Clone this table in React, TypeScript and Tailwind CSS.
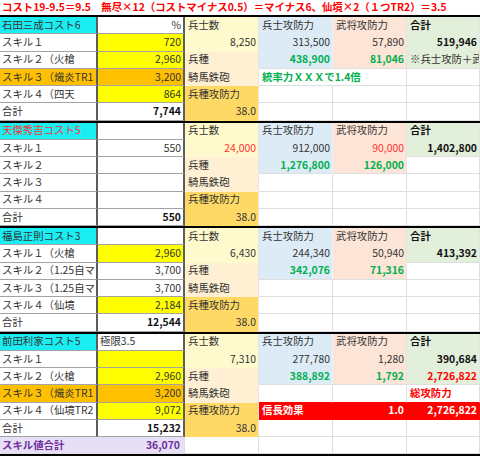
import React from 'react';

const base = 'flex items-center overflow-hidden whitespace-nowrap border-b';

const ly = 'bg-[#fffacd] border-b-[#fffacd] border-r-[#e4e4e4]';
const peach = 'bg-[#fff0d4] border-b-[#fff0d4] border-r-[#e4e4e4]';
const gold = 'bg-[#ffd966] border-b-[#ffd966] border-r-[#e4e4e4]';
const blue = 'bg-[#ddebf7] border-b-[#ddebf7] border-r-[#eef2f6]';
const blueEnd = 'bg-[#ddebf7] border-b-[#dedede] border-r-[#eef2f6]';
const sal = 'bg-[#fce4d6] border-b-[#fce4d6] border-r-[#e4e4e4]';
const salEnd = 'bg-[#fce4d6] border-b-[#dedede] border-r-[#e4e4e4]';
const grn = 'bg-[#e2efda] border-b-[#e2efda] border-r-[#e4e4e4]';
const grnEnd = 'bg-[#e2efda] border-b-[#dedede] border-r-[#e4e4e4]';
const wh = 'bg-white border-b-[#dedede] border-r-[#dedede]';
const red = 'bg-[#ff0000] border-b-[#ff0000] border-r-[#ff0000] text-white font-bold';

const cyan = 'bg-[#1aeef3]';
const yellow = 'bg-[#ffff00]';
const orange = 'bg-[#ffc000]';

type P = { children?: React.ReactNode; className?: string };

function A({ children, className = 'bg-white' }: P) {
  return (
    <div className={`${base} border-r-2 border-r-[#5c5c5c] border-b-[#a3a3a3] pl-[2px] ${className}`}>
      {children}
    </div>
  );
}

function B({ children, className = 'bg-white', left }: P & { left?: boolean }) {
  return (
    <div
      className={`${base} border-r-2 border-r-[#5c5c5c] border-b-[#a3a3a3] ${
        left ? 'justify-start pl-[2px]' : 'justify-end pr-[2px]'
      } ${className}`}
    >
      {children}
    </div>
  );
}

function X({
  children,
  bg = wh,
  right,
  span,
  className = ''
}: {
  children?: React.ReactNode;
  bg?: string;
  right?: boolean;
  span?: boolean;
  className?: string;
}) {
  return (
    <div
      className={`${base} border-r ${bg} ${right ? 'justify-end pr-[2px]' : 'pl-[3px]'} ${
        span ? 'col-span-2' : ''
      } ${className}`}
    >
      {children}
    </div>
  );
}

const grid = 'grid grid-cols-[98px_87px_74px_74px_74px_73px] auto-rows-[17.25px] border-b-2 border-black';

export default function App() {
  return (
    <div className="w-[480px] h-[456px] overflow-hidden bg-white text-[10.4px] leading-none text-[#333] font-['Noto_Sans_CJK_JP',sans-serif]">
      <div className="h-[17px] flex items-center pl-[2px] border-b-2 border-black text-[#ff0000] font-bold whitespace-nowrap">
        コスト19-9.5＝9.5　無尽×12（コストマイナス0.5）＝マイナス6、仙境×2（１つTR2）＝3.5
      </div>

      {/* 石田三成 */}
      <div className={grid}>
        <A className={cyan}>石田三成コスト6</A>
        <B>%</B>
        <X bg={ly}>兵士数</X>
        <X bg={blue}>兵士攻防力</X>
        <X bg={sal}>武将攻防力</X>
        <X bg={grn} className="font-bold text-[#111]">合計</X>

        <A>スキル１</A>
        <B className={yellow}>720</B>
        <X bg={ly} right>8,250</X>
        <X bg={blue} right>313,500</X>
        <X bg={sal} right>57,890</X>
        <X bg={grn} right className="font-bold text-[#111]">519,946</X>

        <A>スキル２（火槍</A>
        <B className={yellow}>2,960</B>
        <X bg={peach}>兵種</X>
        <X bg={blueEnd} right className="font-bold text-[#00b050]">438,900</X>
        <X bg={salEnd} right className="font-bold text-[#00b050]">81,046</X>
        <X bg={grnEnd}>※兵士攻防＋武将攻防</X>

        <A className={orange}>スキル３（熾炎TR1</A>
        <B className={orange}>3,200</B>
        <X bg={peach}>騎馬鉄砲</X>
        <X span className="font-bold text-[#00b050]">統率力ＸＸＸで1.4倍</X>
        <X />

        <A>スキル４（四天</A>
        <B className={yellow}>864</B>
        <X bg={gold}>兵種攻防力</X>
        <X />
        <X />
        <X />

        <A>合計</A>
        <B className="bg-white font-bold text-[#111]">7,744</B>
        <X bg={gold} right>38.0</X>
        <X />
        <X />
        <X />
      </div>

      {/* 天傑秀吉 */}
      <div className={grid}>
        <A className={`${cyan} text-[#ff3030]`}>天傑秀吉コスト5</A>
        <B />
        <X bg={ly}>兵士数</X>
        <X bg={blue}>兵士攻防力</X>
        <X bg={sal}>武将攻防力</X>
        <X bg={grn} className="font-bold text-[#111]">合計</X>

        <A>スキル１</A>
        <B>550</B>
        <X bg={ly} right className="text-[#ff3030]">24,000</X>
        <X bg={blue} right>912,000</X>
        <X bg={sal} right className="text-[#ff3030]">90,000</X>
        <X bg={grnEnd} right className="font-bold text-[#111]">1,402,800</X>

        <A>スキル２</A>
        <B />
        <X bg={peach}>兵種</X>
        <X bg={blueEnd} right className="font-bold text-[#00b050]">1,276,800</X>
        <X bg={salEnd} right className="font-bold text-[#00b050]">126,000</X>
        <X />

        <A>スキル３</A>
        <B />
        <X bg={peach}>騎馬鉄砲</X>
        <X />
        <X />
        <X />

        <A>スキル４</A>
        <B />
        <X bg={gold}>兵種攻防力</X>
        <X />
        <X />
        <X />

        <A>合計</A>
        <B className="bg-white font-bold text-[#111]">550</B>
        <X bg={gold} right>38.0</X>
        <X />
        <X />
        <X />
      </div>

      {/* 福島正則 */}
      <div className={grid}>
        <A className={cyan}>福島正則コスト3</A>
        <B />
        <X bg={ly}>兵士数</X>
        <X bg={blue}>兵士攻防力</X>
        <X bg={sal}>武将攻防力</X>
        <X bg={grn} className="font-bold text-[#111]">合計</X>

        <A>スキル１（火槍</A>
        <B className={yellow}>2,960</B>
        <X bg={ly} right>6,430</X>
        <X bg={blue} right>244,340</X>
        <X bg={sal} right>50,940</X>
        <X bg={grnEnd} right className="font-bold text-[#111]">413,392</X>

        <A>スキル２（1.25自マス</A>
        <B>3,700</B>
        <X bg={peach}>兵種</X>
        <X bg={blueEnd} right className="font-bold text-[#00b050]">342,076</X>
        <X bg={salEnd} right className="font-bold text-[#00b050]">71,316</X>
        <X />

        <A>スキル３（1.25自マス</A>
        <B>3,700</B>
        <X bg={peach}>騎馬鉄砲</X>
        <X />
        <X />
        <X />

        <A>スキル４（仙境</A>
        <B className={yellow}>2,184</B>
        <X bg={gold}>兵種攻防力</X>
        <X />
        <X />
        <X />

        <A>合計</A>
        <B className="bg-white font-bold text-[#111]">12,544</B>
        <X bg={gold} right>38.0</X>
        <X />
        <X />
        <X />
      </div>

      {/* 前田利家 */}
      <div className={`${grid} border-b-0`}>
        <A className={cyan}>前田利家コスト5</A>
        <B left>極限3.5</B>
        <X bg={ly}>兵士数</X>
        <X bg={blue}>兵士攻防力</X>
        <X bg={sal}>武将攻防力</X>
        <X bg={grn} className="font-bold text-[#111]">合計</X>

        <A>スキル１</A>
        <B className={yellow} />
        <X bg={ly} right>7,310</X>
        <X bg={blue} right>277,780</X>
        <X bg={sal} right>1,280</X>
        <X bg={grn} right className="font-bold text-[#111]">390,684</X>

        <A>スキル２（火槍</A>
        <B className={yellow}>2,960</B>
        <X bg={peach}>兵種</X>
        <X bg={blueEnd} right className="font-bold text-[#00b050]">388,892</X>
        <X bg={salEnd} right className="font-bold text-[#00b050]">1,792</X>
        <X bg={grnEnd} right className="font-bold text-[#ff0000]">2,726,822</X>

        <A className={orange}>スキル３（熾炎TR1</A>
        <B className={orange}>3,200</B>
        <X bg={peach}>騎馬鉄砲</X>
        <X bg="bg-white border-b-[#ff0000] border-r-[#dedede]" />
        <X bg="bg-white border-b-[#ff0000] border-r-[#dedede]" />
        <X bg="bg-white border-b-[#ff0000] border-r-[#dedede]" className="font-bold text-[#ff0000]">総攻防力</X>

        <A>スキル４（仙境TR2</A>
        <B className={yellow}>9,072</B>
        <X bg={gold}>兵種攻防力</X>
        <X bg={red}>信長効果</X>
        <X bg={red} right>1.0</X>
        <X bg={red} right>2,726,822</X>

        <A>合計</A>
        <B className="bg-white font-bold text-[#111]">15,232</B>
        <X bg={gold} right>38.0</X>
        <X />
        <X />
        <X />

        <div className="col-span-2 flex items-center justify-between pl-[2px] pr-[4px] bg-[#e6dff5] border-b border-b-[#dedede] border-r border-r-[#dedede] font-bold text-[#7030a0] whitespace-nowrap">
          <span>スキル値合計</span>
          <span>36,070</span>
        </div>
        <X />
        <X />
        <X />
        <X />
      </div>
    </div>
  );
}
